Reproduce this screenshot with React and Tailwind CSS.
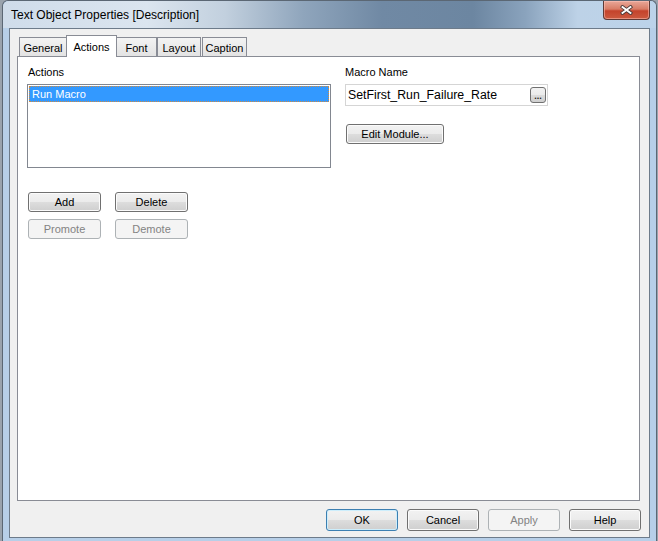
import React from "react";

const btn =
  "flex items-center justify-center rounded-[3px] border text-[11px] leading-none";
const grad =
  " bg-[linear-gradient(#f2f2f2_0%,#ebebeb_50%,#dddddd_50%,#cfcfcf_100%)]";
const btnOn =
  btn + " border-[#707070] text-black shadow-[inset_0_0_0_1px_#fbfbfb]" + grad;
const btnOff = btn + " border-[#adb2b5] text-[#838383] bg-[#f4f4f4]";

function Tab({ label, width, active, overlap }) {
  if (active) {
    return (
      <div
        className="relative z-10 -mb-px -ml-px flex h-[22px] items-start justify-center border border-b-0 border-[#898c95] bg-white pt-[3px] text-[11px] text-black"
        style={{ width }}
      >
        {label}
      </div>
    );
  }
  return (
    <div
      className={
        "flex h-[19px] items-center justify-center border border-b-0 border-[#898c95] bg-[linear-gradient(#f3f3f3,#e3e3e3)] pt-[2px] text-[11px] text-black" +
        (overlap ? " -ml-px" : "")
      }
      style={{ width }}
    >
      {label}
    </div>
  );
}

export default function App() {
  return (
    <div
      className="h-[541px] w-[658px] overflow-hidden bg-[#9aa3ad] pl-[2px]"
      style={{ fontFamily: '"Liberation Sans", Arial, sans-serif' }}
    >
      <div className="flex h-full w-[655px] flex-col rounded-t-[6px] border-x border-t border-[#5b6774] bg-[#b7cfe8]">
        {/* title bar */}
        <div className="flex h-[27px] items-start justify-between rounded-t-[6px] bg-[linear-gradient(90deg,#cfdcea_0%,#dbe5ef_22%,#c2d0de_34%,#8fa5bc_46%,#7089a4_58%,#6c86a1_72%,#8aa3bd_80%,#bdd2e7_88%,#bcd3ea_100%)]">
          <div className="pl-[8px] pt-[7px] text-[12px] leading-[14px] text-black">
            Text Object Properties [Description]
          </div>
          <div className="mr-[6px] flex h-[19px] w-[47px] items-center justify-center rounded-b-[4px] border border-t-0 border-[#5e3a36] bg-[linear-gradient(#e9a899_0%,#d87c66_45%,#c4432c_55%,#cc5a3f_100%)] shadow-[inset_0_0_0_1px_rgba(255,200,190,0.5)]">
            <svg width="13" height="10" viewBox="0 0 13 10">
              <path d="M2.5 2 L10.5 8 M10.5 2 L2.5 8" stroke="#4a3a38" strokeWidth="3.6" strokeLinecap="square" />
              <path d="M2.5 2 L10.5 8 M10.5 2 L2.5 8" stroke="#ffffff" strokeWidth="1.9" strokeLinecap="square" />
            </svg>
          </div>
        </div>

        {/* frame body */}
        <div className="flex flex-1 px-[6px] pb-[3px]">
          <div className="flex flex-1 flex-col border border-[#6d7b8a] bg-[#f0f0f0] pl-[7px] pr-[9px] pt-[6px] pb-[6px]">
            <div className="flex h-[21px] items-end pl-[2px]">
              <Tab label="General" width={48} />
              <Tab label="Actions" width={51} active />
              <Tab label="Font" width={41} overlap />
              <Tab label="Layout" width={44} />
              <div className="w-px" />
              <Tab label="Caption" width={45} />
            </div>

            <div className="flex flex-1 border border-[#898c95] bg-white pl-[9px] pt-[9px]">
              <div className="flex w-[304px] flex-col">
                <div className="h-[13px] pl-px text-[11px] leading-[13px] text-black">Actions</div>
                <div className="mt-[5px] h-[84px] border border-[#828790] bg-white p-px">
                  <div className="h-[16px] border border-dotted border-[#d08a40] bg-[#3399ff] pl-[2px] text-[11px] leading-[14px] text-white">
                    Run Macro
                  </div>
                </div>
                <div className="mt-[24px] flex gap-[14px] pl-px">
                  <div className={btnOn + " h-[20px] w-[73px]"}>Add</div>
                  <div className={btnOn + " h-[20px] w-[73px]"}>Delete</div>
                </div>
                <div className="mt-[7px] flex gap-[14px] pl-px">
                  <div className={btnOff + " h-[20px] w-[73px]"}>Promote</div>
                  <div className={btnOff + " h-[20px] w-[73px]"}>Demote</div>
                </div>
              </div>

              <div className="ml-[14px] flex flex-col">
                <div className="h-[13px] text-[11px] leading-[13px] text-black">Macro Name</div>
                <div className="mt-[5px] flex h-[22px] w-[203px] items-center justify-between border border-[#d5d5d5] bg-white pl-[2px] pr-[1px]">
                  <span className="text-[12.3px] leading-none text-black">SetFirst_Run_Failure_Rate</span>
                  <div className={"flex h-[16px] w-[16px] items-end justify-center rounded-[3px] border border-[#707070] pb-[1px] text-[9px] font-bold leading-[9px] text-[#222]" + grad}>
                    ...
                  </div>
                </div>
                <div className={btnOn + " mt-[18px] ml-px h-[20px] w-[98px]"}>Edit Module...</div>
              </div>
            </div>

            <div className="-mr-px mt-[8px] flex justify-end gap-[9px]">
              <div className={btn + " h-[22px] w-[72px] border-[#3c7fb1] text-black shadow-[inset_0_0_0_1px_#cdeefc]" + grad}>
                OK
              </div>
              <div className={btnOn + " h-[22px] w-[72px]"}>Cancel</div>
              <div className={btnOff + " h-[22px] w-[72px]"}>Apply</div>
              <div className={btnOn + " h-[22px] w-[72px]"}>Help</div>
            </div>
          </div>
        </div>
      </div>
    </div>
  );
}
